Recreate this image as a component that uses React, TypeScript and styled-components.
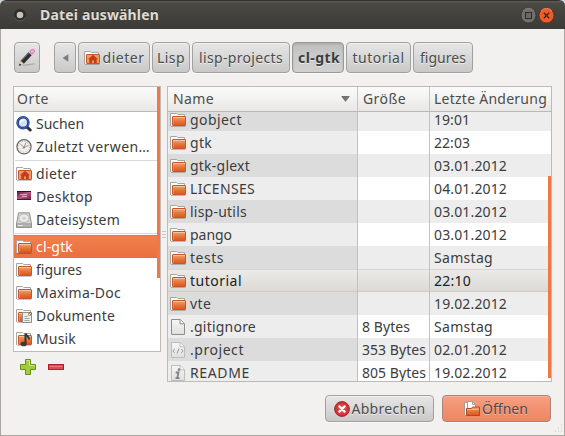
import React, { useLayoutEffect, useRef } from 'react';
import styled, { createGlobalStyle, css } from 'styled-components';

const GlobalStyle = createGlobalStyle`
  * { box-sizing: border-box; }
  body { margin: 0; background: #f2f1f0; }
`;

const Window = styled.div`
  width: 565px;
  height: 436px;
  display: flex;
  flex-direction: column;
  position: relative;
  overflow: hidden;
  background: linear-gradient(#c9d3d6 0 10px, #f2f1f0 10px);
  color: #3c3c3c;
  font: 14px 'Noto Sans', sans-serif;
`;

const TitleBar = styled.header`
  height: 29px;
  flex: none;
  display: flex;
  align-items: center;
  padding: 0 10px 0 13px;
  border-top: 1px solid #353430;
  border-radius: 6px 6px 0 0;
  background: linear-gradient(#5b5a55 0 1px, #4a4944 2px, #3c3b37);
  color: #dfdbd2;
  font-weight: 700;
  svg { display: block; }
`;

const TitleText = styled.div`
  flex: 1;
  margin-left: 13px;
  line-height: 28px;
  text-shadow: 0 -1px 0 #2a2926;
`;

const TitleButtons = styled.div`
  display: flex;
  gap: 1px;
`;

const Body = styled.main`
  flex: 1;
  position: relative;
  display: flex;
  flex-direction: column;
  padding: 13px 12px 0 12px;
  border: 1px solid #aaa7a2;
  border-top: 0;
`;

const PathBar = styled.nav`
  display: flex;
  gap: 2px;
  height: 31px;
  margin-left: 1px;
`;

const buttonFace = css`
  border: 1px solid #a1a1a1;
  border-radius: 4px;
  background: linear-gradient(#e6e6e6, #d8d8d8 50%, #c8c8c8);
  box-shadow: inset 0 1px 0 #f1f1f1, 0 1px 0 #fafafa;
`;

const PathButton = styled.button<{ $w: number; $gap?: number; $active?: boolean }>`
  ${buttonFace}
  display: flex;
  align-items: center;
  justify-content: center;
  gap: 3px;
  width: ${(p) => p.$w}px;
  margin-right: ${(p) => p.$gap ?? 0}px;
  padding: 0;
  flex: none;
  font: inherit;
  line-height: 29px;
  color: #4c4c4c;
  text-shadow: 0 1px 0 #ededed;
  svg { display: block; }
  ${(p) => p.$active && css`
    border-color: #999;
    background: linear-gradient(#bcbcbc, #cacaca 40%, #d0d0d0);
    box-shadow: inset 0 1px 2px #a8a8a8, 0 1px 0 #fafafa;
    padding-left: 2px;
    font-weight: 700;
    color: #3c3c3c;
  `}
`;

const Panes = styled.div`
  display: flex;
  margin-top: 13px;
  height: 296px;
`;

const Side = styled.aside`
  width: 148px;
  display: flex;
  flex-direction: column;
`;

const Panel = styled.div<{ $h: number }>`
  position: relative;
  height: ${(p) => p.$h}px;
  overflow: hidden;
  border: 1px solid #bfbab5;
  background: #fff;
  display: flex;
  flex-direction: column;
`;

const Header = styled.div`
  height: 25px;
  flex: none;
  display: flex;
  line-height: 24px;
  color: #4c4c4c;
  border-bottom: 1px solid #bcb9b4;
  background: linear-gradient(#fbfbfb, #f3f3f2 45%, #e8e7e6);
`;

const HeaderCell = styled.div<{ $w?: number; $pad: number }>`
  display: flex;
  flex: none;
  align-items: center;
  justify-content: space-between;
  width: ${(p) => (p.$w ? `${p.$w}px` : 'auto')};
  padding: 0 7px 0 ${(p) => p.$pad}px;
  border-right: ${(p) => (p.$w ? '1px solid #c9c6c2' : '0')};
`;

const Scroll = styled.div<{ $top: number; $h: number }>`
  position: absolute;
  right: 0;
  top: ${(p) => p.$top}px;
  width: 3px;
  height: ${(p) => p.$h}px;
  background: #f07746;
`;

const Place = styled.div<{ $selected?: boolean }>`
  display: flex;
  align-items: center;
  gap: 4px;
  height: 23px;
  flex: none;
  padding-left: 2px;
  line-height: 23px;
  white-space: nowrap;
  ${(p) => p.$selected && css`
    color: #fff;
    background: linear-gradient(#ee6f3c 0 1px, #f0804f 1px, #ec6e3d);
  `}
  svg { display: block; flex: none; }
`;

const Separator = styled.div`
  height: 4px;
  flex: none;
  margin: 0 3px 0 1px;
  background: linear-gradient(#fff 2px, #d8d8d8 2px 3px, #fff 3px);
`;

const SideTools = styled.div`
  display: flex;
  align-items: center;
  gap: 12px;
  height: 16px;
  margin: 7px 0 0 7px;
  svg { display: block; }
`;

const Splitter = styled.div`
  width: 6px;
  display: flex;
  flex-direction: column;
  align-items: center;
  gap: 2px;
  padding-top: 145px;
  i { width: 4px; height: 1px; background: #c9c6c2; }
`;

const Files = styled.div`
  width: 385px;
`;

const Rows = styled.div`
  margin-top: -4px;
  position: relative;
`;

const HeaderFront = styled.div`
  z-index: 1;
  flex: none;
`;

const Cell = styled.div<{ $w?: number; $dark?: boolean; $name?: boolean }>`
  display: flex;
  align-items: center;
  gap: 4px;
  ${(p) => (p.$w ? `width: ${p.$w}px; border-right: 1px solid #c3c1be;` : 'flex: 1;')}
  padding-left: ${(p) => (p.$name ? 2 : 4)}px;
  background: ${(p) => (p.$name ? (p.$dark ? '#dcdcdc' : '#ededed') : p.$dark ? '#ededed' : '#fff')};
  svg { display: block; flex: none; }
`;

const Row = styled.div<{ $focus?: boolean }>`
  display: flex;
  height: 23px;
  line-height: 23px;
  white-space: nowrap;
  ${(p) => p.$focus && css`
    background: linear-gradient(#d8d6d2 0 1px, #ebeae8 1px, #dbdad6 22px, #cfccc7 22px);
    color: #222;
    ${Cell} { background: transparent; }
  `}
`;

const Actions = styled.footer`
  display: flex;
  justify-content: flex-end;
  gap: 8px;
  margin: 13px 1px 0 0;
  height: 27px;
`;

const ActionButton = styled.button<{ $primary?: boolean }>`
  ${buttonFace}
  display: flex;
  align-items: center;
  justify-content: center;
  gap: 2px;
  width: 109px;
  padding: 0;
  font: inherit;
  line-height: 25px;
  color: #4c4c4c;
  text-shadow: 0 1px 0 #ededed;
  svg { display: block; }
  ${(p) => p.$primary && css`
    border-color: #a8837a;
    background: linear-gradient(#f5a184, #f29170 50%, #ee8763);
    box-shadow: inset 0 1px 0 #f6b49d, 0 1px 0 #fafafa;
    text-shadow: 0 1px 0 #f7b7a0;
    padding-right: 1px;
  `}
`;

const Grip = styled.div`
  position: absolute;
  right: 1px;
  bottom: 1px;
  svg { display: block; }
`;

const Text = styled.span`
  display: inline-block;
  white-space: pre;
  flex: none;
`;

/** A label tracked so that its advance width equals `w`. */
function Label({ w, children }: { w: number; children: string }) {
  const ref = useRef<HTMLSpanElement>(null);
  useLayoutEffect(() => {
    const el = ref.current;
    if (!el) return;
    el.style.letterSpacing = '0px';
    const natural = el.getBoundingClientRect().width;
    el.style.letterSpacing = `${(w - natural) / children.length}px`;
  }, [w, children]);
  return <Text ref={ref}>{children}</Text>;
}

type IconName = 'folder' | 'home' | 'search' | 'recent' | 'desktop' | 'disk' | 'docs' | 'music' | 'file' | 'code' | 'info';

function FolderBase({ children }: { children?: React.ReactNode }) {
  return (
    <svg width="16" height="16" viewBox="0 0 16 16">
      <path d="M.5 14V1.5h6.2l1 1h6.8V12" fill="#fbfbfa" stroke="#aaa69f" />
      <rect x="2.5" y="4.5" width="13" height="9" rx=".5" fill="url(#orange)" stroke="#c8562a" />
      <path d="M3 5.5h12" stroke="#f5c39c" />
      <path d="M3.5 6v7" stroke="#eda06f" opacity=".6" />
      <path d="M1 14.5h14.5" stroke="#000" opacity=".22" />
      {children}
    </svg>
  );
}

function Icon({ name }: { name: IconName }) {
  switch (name) {
    case 'folder':
      return <FolderBase />;
    case 'home':
      return (
        <FolderBase>
          <rect x="3" y="5" width="12" height="8" fill="#ee9a66" />
          <path d="m9 4.8 5 4.4h-1.3V13H10v-2.5H8V13H5.3V9.2H4z" fill="#c23f14" />
        </FolderBase>
      );
    case 'docs':
      return (
        <FolderBase>
          <path d="M6.5 4.5h6l3 3v7h-9z" fill="#ececea" stroke="#8f8f8b" />
          <path d="M12.5 4.5v3h3M8.5 8.5h3M8.5 10.5h5M8.5 12.5h5" fill="none" stroke="#a5a5a1" />
        </FolderBase>
      );
    case 'music':
      return (
        <FolderBase>
          <path d="M9.5 13V2.5c1 2.5 4 3 3.7 6" fill="none" stroke="#303434" strokeWidth="2" />
          <ellipse cx="7.7" cy="13" rx="3" ry="2.3" fill="#363a3a" />
        </FolderBase>
      );
    case 'search':
      return (
        <svg width="16" height="16" viewBox="0 0 16 16">
          <path d="m10.8 10.8 3.4 3.2" stroke="#2b2e38" strokeWidth="3" strokeLinecap="round" />
          <circle cx="7" cy="6.7" r="5.4" fill="#d5e4f4" stroke="#203f90" strokeWidth="2.6" />
          <circle cx="7" cy="6.7" r="5.6" fill="none" stroke="#5d7fc4" strokeWidth=".6" />
          <path d="M4.2 6.5C4.6 4.3 6.5 3.6 8.5 4" stroke="#fff" strokeWidth="1.4" fill="none" />
        </svg>
      );
    case 'recent':
      return (
        <svg width="16" height="16" viewBox="0 0 16 16">
          <circle cx="8" cy="7.8" r="7.1" fill="#f1f1ee" stroke="#686a67" strokeWidth="1.2" />
          <circle cx="8" cy="7.8" r="5.4" fill="none" stroke="#a5a7a3" strokeWidth="1" strokeDasharray="1 1.83" />
          <path d="M8 8.5 4.5 5M8 8.5 10 3.5" stroke="#8a8c8a" strokeWidth=".9" />
          <path d="m6.5 9.3 6-3" stroke="#e0776b" strokeWidth=".9" />
          <circle cx="8" cy="8.5" r="1.1" fill="#888" />
        </svg>
      );
    case 'desktop':
      return (
        <svg width="16" height="16" viewBox="0 0 16 16">
          <rect x="1" y="2" width="14" height="9" fill="url(#plum)" />
          <path d="M1 2.5h14" stroke="#25151f" />
          <path d="M4 5.5h7M6 7.5h5" stroke="#f3cfdd" opacity=".7" />
          <path d="M1 10.5h14" stroke="#4d1932" />
        </svg>
      );
    case 'disk':
      return (
        <svg width="16" height="16" viewBox="0 0 16 16">
          <path d="M2.5.8h11l2 11v3.7H.5v-3.7z" fill="#d6d6d4" stroke="#969793" />
          <ellipse cx="8" cy="6.2" rx="5.2" ry="4.4" fill="#e9e9e7" stroke="#b3b4b0" />
          <ellipse cx="8" cy="6.4" rx="1.5" ry="1.2" fill="#c8c9c5" />
          <path d="M.5 11.8h15v3.5H.5z" fill="#b6b7b4" stroke="#8a8b87" strokeWidth=".7" />
          <path d="M2 13.5h5" stroke="#e4e4e2" />
        </svg>
      );
    default:
      return (
        <svg width="16" height="16" viewBox="0 0 16 16">
          <path d="M1.5.5h8.7l4.3 4.2v10.8h-13z" fill="url(#paper)" stroke={name === 'file' ? '#8e8f8b' : '#bdbdba'} />
          <path d="M10 .8v4h4.2" fill="#fafafa" stroke={name === 'file' ? '#8e8f8b' : '#bdbdba'} />
          {name === 'code' && <path d="M4.8 7 2.8 9l2 2M11.2 7l2 2-2 2M8.9 6.5 7.1 11.5" fill="none" stroke="#9b9c98" strokeWidth="1" />}
          {name === 'info' && (
            <g fill="none" stroke="#80817e" strokeWidth="1.8">
              <path d="M5.7 7.5h2.8L7.3 13M5.5 13.2h4" />
              <circle cx="9" cy="4.7" r=".5" />
            </g>
          )}
        </svg>
      );
  }
}

const Defs = styled.svg`
  position: absolute;
  width: 0;
  height: 0;
`;

type PlaceItem = { icon: IconName; label: string; w: number; selected?: boolean } | null;

const places: PlaceItem[] = [
  { icon: 'search', label: 'Suchen', w: 48 },
  { icon: 'recent', label: 'Zuletzt verwen…', w: 114 },
  null,
  { icon: 'home', label: 'dieter', w: 41 },
  { icon: 'desktop', label: 'Desktop', w: 57 },
  { icon: 'disk', label: 'Dateisystem', w: 84 },
  null,
  { icon: 'folder', label: 'cl-gtk', w: 37, selected: true },
  { icon: 'folder', label: 'figures', w: 46 },
  { icon: 'folder', label: 'Maxima-Doc', w: 85 },
  { icon: 'docs', label: 'Dokumente', w: 79 },
  { icon: 'music', label: 'Musik', w: 40 },
];

type FileItem = { icon: IconName; name: string; w: number; size?: [string, number]; date: string; dw: number };

const files: FileItem[] = [
  { icon: 'folder', name: 'gobject', w: 52, date: '19:01', dw: 36 },
  { icon: 'folder', name: 'gtk', w: 22, date: '22:03', dw: 36 },
  { icon: 'folder', name: 'gtk-glext', w: 60, date: '03.01.2012', dw: 73 },
  { icon: 'folder', name: 'LICENSES', w: 65, date: '04.01.2012', dw: 73 },
  { icon: 'folder', name: 'lisp-utils', w: 57, date: '03.01.2012', dw: 73 },
  { icon: 'folder', name: 'pango', w: 42, date: '03.01.2012', dw: 73 },
  { icon: 'folder', name: 'tests', w: 34, date: 'Samstag', dw: 59 },
  { icon: 'folder', name: 'tutorial', w: 52, date: '22:10', dw: 37 },
  { icon: 'folder', name: 'vte', w: 21.5, date: '19.02.2012', dw: 73 },
  { icon: 'file', name: '.gitignore', w: 66, date: 'Samstag', dw: 59, size: ['8 Bytes', 48] },
  { icon: 'code', name: '.project', w: 54, date: '02.01.2012', dw: 73, size: ['353 Bytes', 64] },
  { icon: 'info', name: 'README', w: 60, date: '19.02.2012', dw: 73, size: ['805 Bytes', 64] },
];

export default function App() {
  return (
    <Window>
      <GlobalStyle />
      <Defs aria-hidden="true">
        <defs>
          <linearGradient id="orange" x2="0" y2="1"><stop stopColor="#f0a874" /><stop offset=".55" stopColor="#e4733a" /><stop offset="1" stopColor="#dc5519" /></linearGradient>
          <linearGradient id="plum" x2="1" y2="1"><stop stopColor="#4f1638" /><stop offset=".5" stopColor="#b85583" /><stop offset="1" stopColor="#65203f" /></linearGradient>
          <linearGradient id="paper" x2="0" y2="1"><stop stopColor="#f7f7f6" /><stop offset="1" stopColor="#dfdfdd" /></linearGradient>
          <radialGradient id="red"><stop stopColor="#ee5a55" /><stop offset="1" stopColor="#cc2a30" /></radialGradient>
        </defs>
      </Defs>

      <TitleBar>
        <svg width="14" height="14" viewBox="0 0 14 14">
          <circle cx="7" cy="7" r="6" fill="#2d2c29" />
          <path d="M1.5 9.5a6 6 0 0 0 11 0" stroke="#5e5d58" fill="none" />
          <circle cx="7" cy="7" r="3.3" fill="#c5c2ba" />
        </svg>
        <TitleText><Label w={119}>Datei auswählen</Label></TitleText>
        <TitleButtons>
          <svg width="17" height="17" viewBox="0 0 17 17">
            <circle cx="8.5" cy="8.5" r="7.5" fill="#73716b" stroke="#31302c" strokeWidth=".8" />
            <path d="M3 4a7 7 0 0 1 11 0" stroke="#94928b" fill="none" strokeWidth=".8" />
            <rect x="5.5" y="5.5" width="6" height="6" fill="#6b6a63" stroke="#33322e" strokeWidth="1.2" />
          </svg>
          <svg width="17" height="17" viewBox="0 0 17 17">
            <circle cx="8.5" cy="8.5" r="7.5" fill="#ee5c2b" stroke="#5d2b18" strokeWidth=".8" />
            <path d="M3 4a7 7 0 0 1 11 0" stroke="#f79a76" fill="none" strokeWidth=".8" />
            <path d="m5.8 5.8 5.4 5.4m0-5.4-5.4 5.4" stroke="#4a2012" strokeWidth="1.3" />
          </svg>
        </TitleButtons>
      </TitleBar>

      <Body>
        <PathBar>
          <PathButton $w={26} $gap={12} aria-label="Pfad eingeben">
            <svg width="18" height="18" viewBox="0 0 18 18">
              <path d="M5 16.3 16.5 14.8" stroke="#aaa" strokeWidth="1.2" />
              <path d="m4.2 13.3 8.6-9.3" stroke="#2e3133" strokeWidth="4.4" />
              <path d="m3.7 11.7 7.8-8.4" stroke="#6a7073" strokeWidth="1" />
              <path d="m12 4.8 1.9-2" stroke="#dcdcdc" strokeWidth="4.4" />
              <path d="m13.9 2.9.8-.8" stroke="#d978b4" strokeWidth="4.4" strokeLinecap="round" />
              <path d="m13.9 2.9.8-.8" stroke="#f3b4dc" strokeWidth="2.6" strokeLinecap="round" />
              <path d="M1.3 16.5 2.5 11.9l3.3 3z" fill="#f0dc9f" stroke="#a68d58" strokeWidth=".4" />
              <path d="m1.1 16.7.6-2.3 1.6 1.5z" fill="#111" />
            </svg>
          </PathButton>
          <PathButton $w={22} aria-label="Zurück">
            <svg width="7" height="8" viewBox="0 0 7 8"><path d="M6.3.3v7.4L.5 4z" fill="#7d7d7d" /></svg>
          </PathButton>
          <PathButton $w={72}><Icon name="home" /><Label w={42}>dieter</Label></PathButton>
          <PathButton $w={38}><Label w={28}>Lisp</Label></PathButton>
          <PathButton $w={98}><Label w={84}>lisp-projects</Label></PathButton>
          <PathButton $w={52} $active><Label w={42}>cl-gtk</Label></PathButton>
          <PathButton $w={65}><Label w={52}>tutorial</Label></PathButton>
          <PathButton $w={60}><Label w={46}>figures</Label></PathButton>
        </PathBar>

        <Panes>
          <Side>
            <Panel $h={266}>
              <Header><HeaderCell $pad={3}><Label w={32}>Orte</Label></HeaderCell></Header>
              {places.map((p, i) => p ? (
                <Place key={i} $selected={p.selected}><Icon name={p.icon} /><Label w={p.w}>{p.label}</Label></Place>
              ) : <Separator key={i} />)}
              <Scroll $top={0} $h={191} />
            </Panel>
            <SideTools>
              <svg width="16" height="16" viewBox="0 0 16 16">
                <path d="M5.5.5h5v5h5v5h-5v5h-5v-5h-5v-5h5z" fill="#a5cb3c" stroke="#5f9320" />
                <path d="M6.5 1.5h3v5h5" fill="none" stroke="#d0e48a" />
              </svg>
              <svg width="16" height="7" viewBox="0 0 16 7">
                <rect x=".5" y=".5" width="15" height="5" fill="#dc4a54" stroke="#ad1f2c" />
                <path d="M2 2.5h12" stroke="#e97a80" />
              </svg>
            </SideTools>
          </Side>
          <Splitter><i /><i /><i /></Splitter>
          <Files>
            <Panel $h={296}>
              <HeaderFront>
                <Header>
                  <HeaderCell $w={190} $pad={5}>
                    <Label w={41}>Name</Label>
                    <svg width="9" height="6" viewBox="0 0 9 6"><path d="M.8.5h7.4L4.5 5.3z" fill="#777" stroke="#555" strokeWidth=".7" /></svg>
                  </HeaderCell>
                  <HeaderCell $w={72} $pad={5}><Label w={43}>Größe</Label></HeaderCell>
                  <HeaderCell $pad={4}><Label w={113}>Letzte Änderung</Label></HeaderCell>
                </Header>
              </HeaderFront>
              <Rows>
                {files.map((f, i) => (
                  <Row key={f.name} $focus={i === 7}>
                    <Cell $w={190} $name $dark={i % 2 === 0}><Icon name={f.icon} /><Label w={f.w}>{f.name}</Label></Cell>
                    <Cell $w={72} $dark={i % 2 === 0}>{f.size && <Label w={f.size[1]}>{f.size[0]}</Label>}</Cell>
                    <Cell $dark={i % 2 === 0}><Label w={f.dw}>{f.date}</Label></Cell>
                  </Row>
                ))}
              </Rows>
              <Scroll $top={89} $h={202} />
            </Panel>
          </Files>
        </Panes>

        <Actions>
          <ActionButton>
            <svg width="16" height="16" viewBox="0 0 16 16">
              <circle cx="8" cy="8" r="7.4" fill="url(#red)" stroke="#a8262b" />
              <path d="m5.4 5.4 5.2 5.2m0-5.2-5.2 5.2" stroke="#fff" strokeWidth="2.2" strokeLinecap="round" />
            </svg>
            <Label w={74}>Abbrechen</Label>
          </ActionButton>
          <ActionButton $primary>
            <svg width="16" height="16" viewBox="0 0 16 16">
              <path d="M.5 14V1.5h3V14" fill="#f6f5f3" stroke="#a39f98" />
              <path d="M3.5 12V.5h5l3 3V12" fill="#fbfbfa" stroke="#a39f98" />
              <path d="M8.5.5v3h3" fill="none" stroke="#a39f98" />
              <path d="M2.5 7.5h5l1-1.5h7v8.5h-13z" fill="url(#orange)" stroke="#b34a1f" />
              <path d="M3.5 8.5h11" stroke="#f4b68c" />
            </svg>
            <Label w={46}>Öffnen</Label>
          </ActionButton>
        </Actions>
        <Grip>
          <svg width="10" height="10" viewBox="0 0 10 10">
            <path d="M8 1h1M5 4h1M8 4h1M2 7h1M5 7h1M8 7h1" stroke="#c5c2bd" strokeWidth="1.2" />
          </svg>
        </Grip>
      </Body>
    </Window>
  );
}
